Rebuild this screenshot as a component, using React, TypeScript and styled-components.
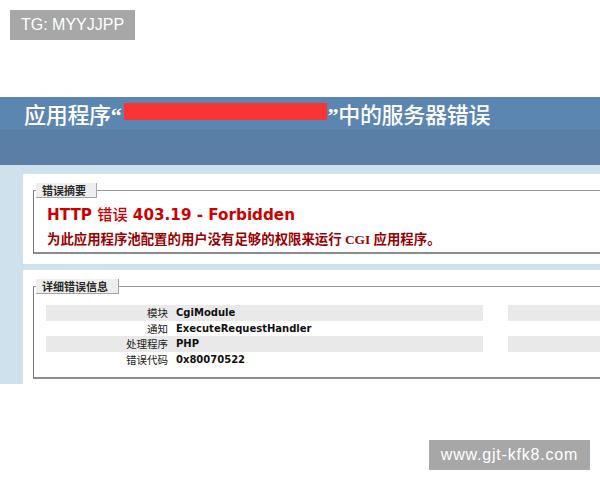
import React from "react";
import styled, { createGlobalStyle } from "styled-components";

const Global = createGlobalStyle`
  html, body { margin: 0; padding: 0; background: #fff; }
  body { font-family: "DejaVu Sans", "Noto Sans CJK SC", sans-serif; }
`;

const Page = styled.div`
  position: relative;
  width: 600px;
  height: 480px;
  overflow: hidden;
  padding-top: 97px;
  box-sizing: border-box;
  background: #fff;
`;

const Badge = styled.div<{ $left: number; $top: number; $width: number; $spacing?: number }>`
  position: absolute;
  left: ${(p) => p.$left}px;
  top: ${(p) => p.$top}px;
  width: ${(p) => p.$width}px;
  height: 30px;
  background: #a7a7a7;
  color: #fff;
  font: 16px/30px "Liberation Sans", Arial, sans-serif;
  letter-spacing: ${(p) => p.$spacing ?? 0}px;
  text-align: center;
  white-space: nowrap;
  z-index: 2;
`;

const TitleBar = styled.header`
  height: 33px;
  background: #5b86b1;
  padding-left: 24px;
  color: #fff;
  font: 500 22px/33px "Noto Sans CJK SC", sans-serif;
  letter-spacing: -0.3px;
  white-space: nowrap;
`;

const Quote = styled.span`
  font-family: "Liberation Serif", serif;
  font-weight: 700;
`;

const Redacted = styled.span`
  display: inline-block;
  vertical-align: top;
  margin: 6px 1px 0 2px;
  width: 203px;
  height: 17px;
  background: #f83434;
`;

const Band = styled.div`
  height: 35px;
  background: #5a7ea6;
  border-top: 1px solid #557aa0;
  box-sizing: border-box;
`;

const Body = styled.main`
  background: #cfe1ec;
  padding: 9px 0 0 23px;
`;

const Panel = styled.section<{ $padBottom: number; $gap?: number }>`
  background: #fff;
  margin-top: ${(p) => p.$gap ?? 0}px;
  padding: 16px 0 ${(p) => p.$padBottom}px 10px;
`;

const Fieldset = styled.div<{ $padBottom: number }>`
  border-top: 1px solid #999;
  border-left: 1px solid #777;
  border-bottom: 2px solid #8c8c8c;
  margin-right: -60px;
  padding: 0 0 ${(p) => p.$padBottom}px 0;
`;

const Legend = styled.div`
  width: fit-content;
  margin: -8px 0 0 2px;
  height: 14px;
  padding: 0 10px 0 6px;
  background: #eee;
  border-right: 1px solid #a5a5a5;
  border-bottom: 1px solid #a5a5a5;
  color: #2a2a2a;
  font: 700 11px/14px "Noto Sans CJK SC", sans-serif;
`;

const Summary = styled.div`
  padding-left: 13px;
`;

const ErrorTitle = styled.h2`
  margin: 7px 0 0;
  color: #c00;
  font: 700 15.2px/20px "DejaVu Sans", "Noto Sans CJK SC", sans-serif;
  white-space: nowrap;
`;

const CjkLight = styled.span`
  font-weight: 500;
`;

const ErrorText = styled.p`
  margin: 6px 0 0;
  color: #9a0000;
  font: 700 13.4px/18px "Liberation Serif", "Noto Sans CJK SC", serif;
  white-space: nowrap;
`;

const Tables = styled.div`
  display: flex;
  gap: 25px;
  margin-top: 11px;
  padding-left: 12px;
`;

const Table = styled.div<{ $width: number }>`
  width: ${(p) => p.$width}px;
  flex: none;
`;

const Row = styled.div<{ $alt: boolean; $labelWidth: number }>`
  display: grid;
  grid-template-columns: ${(p) => p.$labelWidth}px 1fr;
  height: 15.5px;
  align-items: center;
  background: ${(p) => (p.$alt ? "#e9e9e9" : "transparent")};
`;

const Label = styled.span`
  text-align: right;
  padding-right: 2px;
  color: #222;
  font: 400 10.5px/15px "Noto Sans CJK SC", sans-serif;
  white-space: nowrap;
`;

const Value = styled.span`
  padding-left: 6px;
  color: #111;
  font: 700 10px/15px "DejaVu Sans", sans-serif;
  white-space: nowrap;
`;

const leftRows = [
  ["模块", "CgiModule"],
  ["通知", "ExecuteRequestHandler"],
  ["处理程序", "PHP"],
  ["错误代码", "0x80070522"],
];

const rightRows = ["r1", "r2", "r3", "r4"];

export default function App() {
  return (
    <>
      <Global />
      <Page>
        <Badge $left={10} $top={10} $width={125}>
          TG: MYYJJPP
        </Badge>
        <TitleBar>
          应用程序<Quote>“</Quote>
          <Redacted />
          <Quote>”</Quote>中的服务器错误
        </TitleBar>
        <Band />
        <Body>
          <Panel $padBottom={10}>
            <Fieldset $padBottom={3}>
              <Legend>错误摘要</Legend>
              <Summary>
                <ErrorTitle>
                  HTTP <CjkLight>错误</CjkLight> 403.19 - Forbidden
                </ErrorTitle>
                <ErrorText>为此应用程序池配置的用户没有足够的权限来运行 CGI 应用程序。</ErrorText>
              </Summary>
            </Fieldset>
          </Panel>
          <Panel $padBottom={5} $gap={6}>
            <Fieldset $padBottom={10}>
              <Legend>详细错误信息</Legend>
              <Tables>
                <Table $width={437}>
                  {leftRows.map(([l, v], i) => (
                    <Row key={l} $alt={i % 2 === 0} $labelWidth={124}>
                      <Label>{l}</Label>
                      <Value>{v}</Value>
                    </Row>
                  ))}
                </Table>
                <Table $width={260}>
                  {rightRows.map((k, i) => (
                    <Row key={k} $alt={i % 2 === 0} $labelWidth={145} />
                  ))}
                </Table>
              </Tables>
            </Fieldset>
          </Panel>
        </Body>
        <Badge $left={429} $top={440} $width={161} $spacing={0.8}>
          www.gjt-kfk8.com
        </Badge>
      </Page>
    </>
  );
}
